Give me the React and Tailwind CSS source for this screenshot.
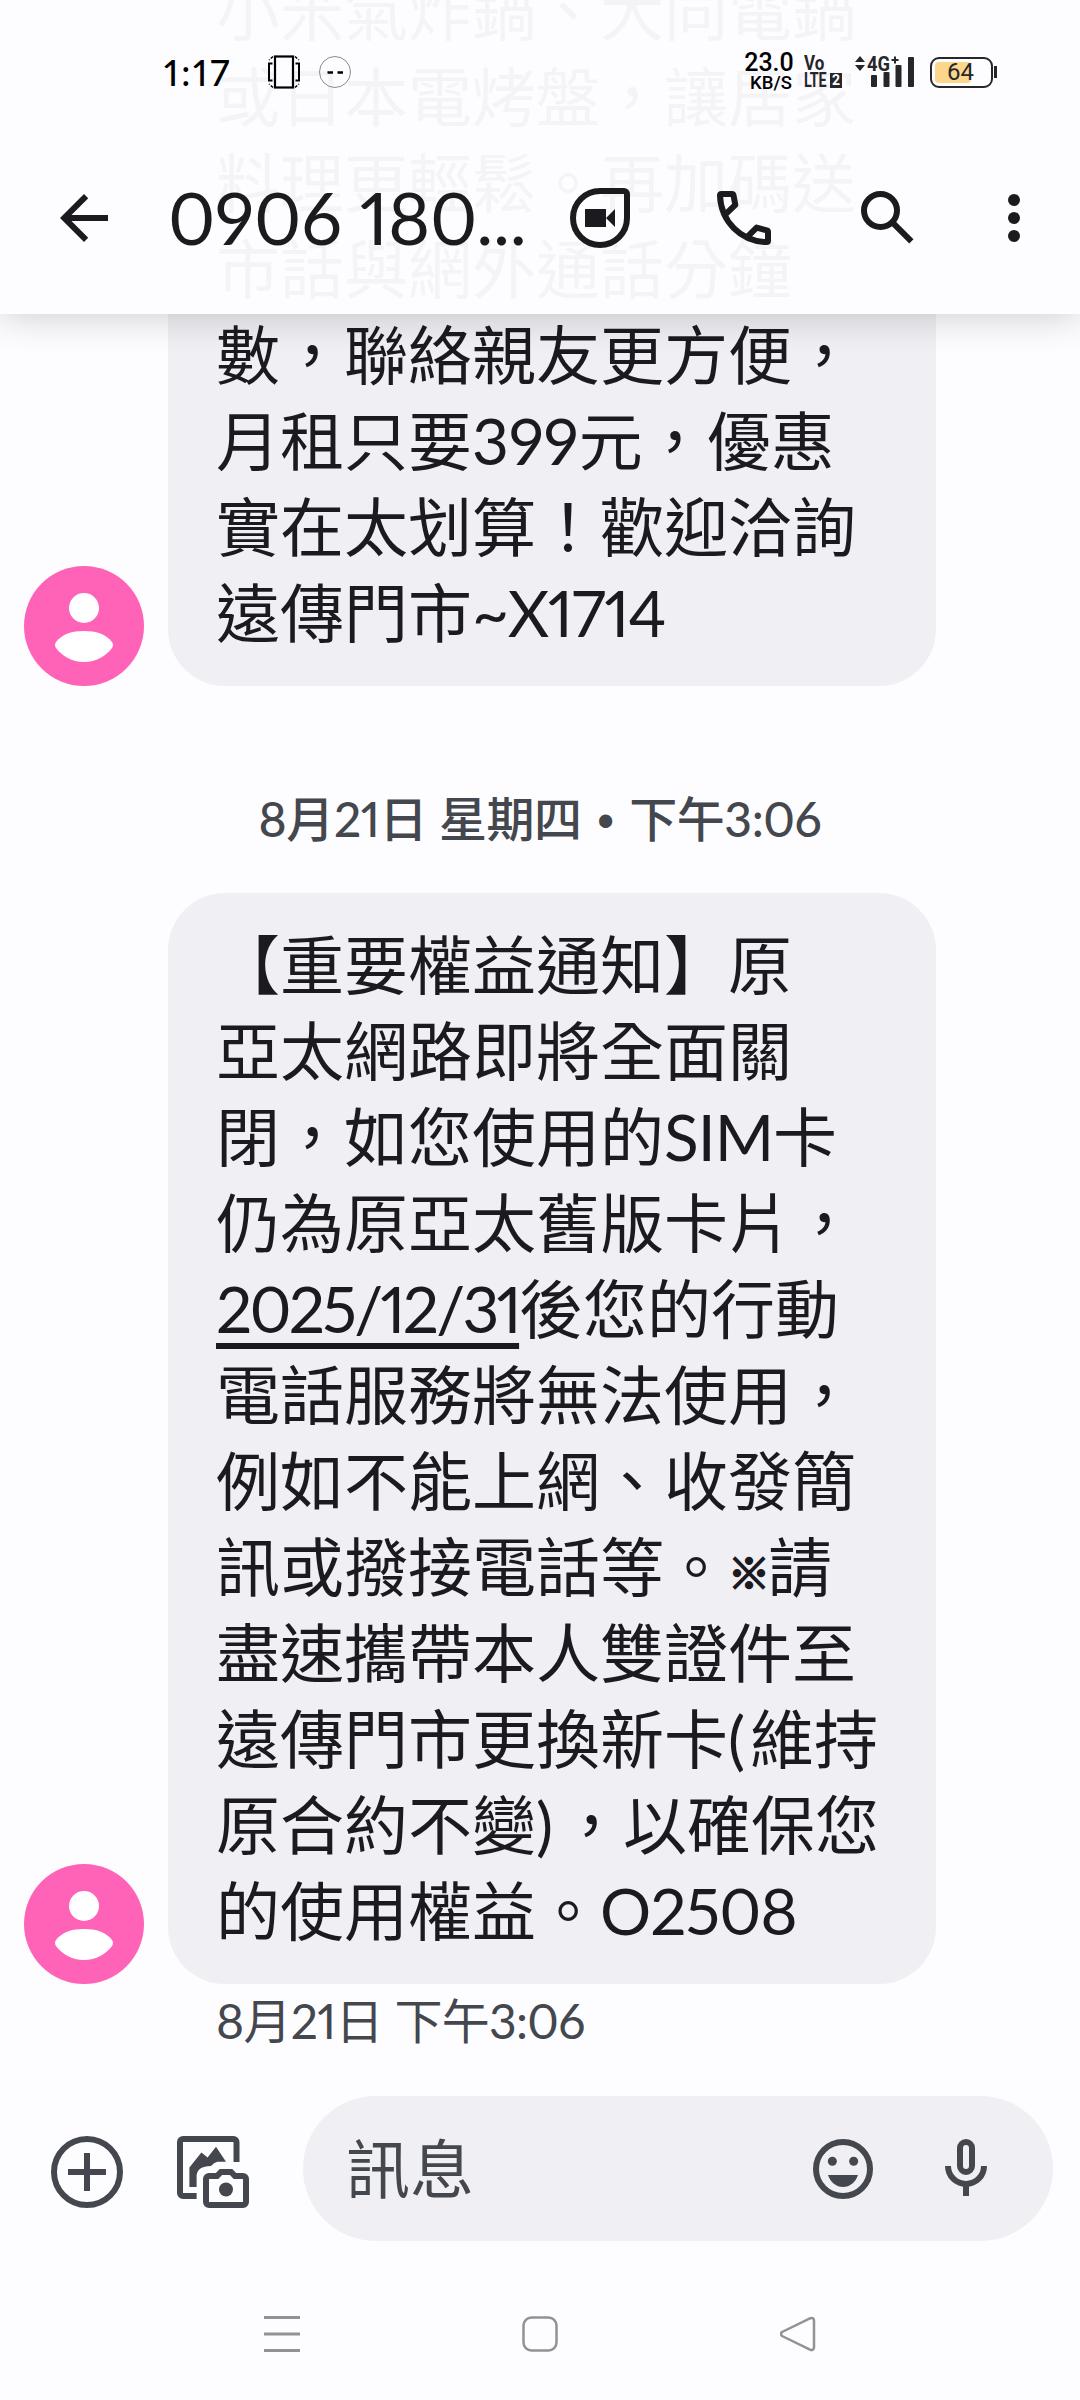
import { clsx } from 'clsx'

const FIRST_MESSAGE = [
  '小米氣炸鍋、大同電鍋',
  '或日本電烤盤，讓居家',
  '料理更輕鬆。再加碼送',
  '市話與網外通話分鐘',
  '數，聯絡親友更方便，',
  <>月租只要<Latin>399</Latin>元，優惠</>,
  '實在太划算！歡迎洽詢',
  <>遠傳門市<Latin className="tracking-[-1.4px]">~X1714</Latin></>,
]

const SECOND_MESSAGE = [
  '【重要權益通知】原',
  '亞太網路即將全面關',
  <>閉，如您使用的<Latin className="tracking-[-1px]">SIM</Latin>卡</>,
  '仍為原亞太舊版卡片，',
  <>
    <Latin className="tracking-[-2.8px] underline decoration-[6px] underline-offset-[10px] [text-decoration-skip-ink:none]">2025/12/31</Latin>
    後您的行動
  </>,
  '電話服務將無法使用，',
  '例如不能上網、收發簡',
  <>訊或撥接電話等。<span className="inline-block w-[40px] text-center align-[2px] text-[42px] leading-none [-webkit-text-stroke:2px_#1b1b1f]">※</span>請</>,
  '盡速攜帶本人雙證件至',
  <>遠傳門市更換新卡<Latin className="tracking-[5px]">(</Latin>維持</>,
  <>原合約不變<Latin className="tracking-[6px]">)</Latin>，以確保您</>,
  <>的使用權益。<Latin className="tracking-[-1px]">O2508</Latin></>,
]

function Latin({ className, children }) {
  return <span className={clsx('proportional-nums', className)}>{children}</span>
}

function Icon({ className, children }) {
  return (
    <svg viewBox="0 0 24 24" fill="currentColor" className={clsx('size-[72px] shrink-0', className)}>
      {children}
    </svg>
  )
}

function StatusBar() {
  return (
    <div className="flex h-[144px] items-center pl-[164px] pr-[83px] text-black">
      <span className="w-[103px] text-[36px] font-medium leading-none tracking-[2.8px] proportional-nums">1:17</span>
      <svg viewBox="0 0 34 34" className="size-[34px]" fill="none" stroke="currentColor">
        <rect x="8" y="1.5" width="18" height="31" strokeWidth="2.2" />
        <path d="M5.5 8.5H2v17h3.5M28.5 8.5H32v17h-3.5" strokeWidth="2" />
        <path d="M6 1.5 2 5M28 1.5 32 5M6 32.5 2 29M28 32.5 32 29" strokeWidth="1.5" strokeDasharray="3 1.5" />
      </svg>
      <svg viewBox="0 0 34 34" className="ml-[17px] size-[34px]" fill="none">
        <circle cx="17" cy="17" r="15.5" stroke="#8b8b90" strokeWidth="1" />
        <path d="M9.5 17.5h5.5M19.5 17.5H25" stroke="#000" strokeWidth="2.5" />
      </svg>

      <div className="ml-auto flex items-center">
        <div className="flex w-[50px] flex-col items-center font-[Roboto] font-medium">
          <span className="-ml-[4px] text-[25px] leading-[19px]">23.0</span>
          <span className="mt-[2px] text-[18.5px] leading-[18px]">KB/S</span>
        </div>
        <div className="ml-[8px] w-[39px] font-[Roboto] font-bold text-[#26262b]">
          <p className="origin-left scale-x-[0.85] text-[20px] leading-[17px]">Vo</p>
          <p className="flex items-center text-[20px] leading-[17px]">
            <span className="w-[26px] origin-left scale-x-[0.72] tracking-[-0.5px]">LTE</span>
            <span className="flex h-[15px] w-[12px] items-center justify-center bg-[#26262b] text-[14px] text-white">2</span>
          </p>
        </div>
        <svg viewBox="0 0 62 34" className="ml-[11px] h-[34px] w-[62px]" fill="#26262b">
          <path d="m6 1 5 6H1zM6 16l5-6H1z" />
          <text x="13" y="15.5" fontSize="21" fontWeight="700" fontFamily="Roboto" textLength="23" lengthAdjust="spacingAndGlyphs">4G</text>
          <path d="M37.5 5h7M41 1.5v7" stroke="#26262b" strokeWidth="2" />
          <rect x="17" y="20" width="6" height="12" rx="1" />
          <rect x="29.5" y="17" width="6" height="15" rx="1" />
          <rect x="41.5" y="10" width="6" height="22" rx="1" />
          <rect x="54" y="2" width="6" height="30" rx="1" />
        </svg>
        <div className="ml-[14px] flex items-center">
          <div className="relative flex h-[31px] w-[63px] items-center justify-center rounded-[9px] border-[2.5px] border-[#26262b] p-[3px]">
            <div className="mr-auto h-full w-[36px] rounded-[4px] bg-[#fcd68a]" />
            <span className="absolute left-[15px] font-[Roboto] text-[24px] leading-none text-[#26262b]">64</span>
          </div>
          <div className="ml-px h-[12px] w-[3px] bg-[#26262b]" />
        </div>
      </div>
    </div>
  )
}

function Header() {
  return (
    <header className="absolute inset-x-0 top-0 h-[314px] bg-[#fdfcff]/96 text-[#1b1b1f] shadow-[0_2px_36px_rgba(0,0,0,0.2)]">
      <StatusBar />
      <div className="flex h-[148px] items-center pl-12">
        <Icon>
          <path d="M20 11H7.83l5.59-5.59L12 4l-8 8 8 8 1.41-1.41L7.83 13H20v-2z" />
        </Icon>
        <h1 className="-mt-[3px] ml-[48px] w-[396px] whitespace-nowrap text-[72px] leading-none tracking-[-0.3px] proportional-nums">0906 180...</h1>
        <Icon>
          <path d="M12 3h8a1 1 0 0 1 1 1v8a9 9 0 1 1-9-9z" fill="none" stroke="currentColor" strokeWidth="2" />
          <path d="M7 9h7v3l3-3v6l-3-3v3H7z" />
        </Icon>
        <Icon className="ml-[72px]">
          <path d="M5.8 10.8 9.1 7.6 8.5 4.4Q8.4 4 8 4H4.5Q4 4 4 4.5C4.3 13.2 11 19.8 19.5 20Q20 20 20 19.5V16.6Q20 16.2 19.6 16.1L16.2 15.2 13.2 18.2" fill="none" stroke="currentColor" strokeWidth="2" strokeLinejoin="round" />
        </Icon>
        <Icon className="ml-[72px]">
          <circle cx="9.5" cy="9.5" r="5.5" fill="none" stroke="currentColor" strokeWidth="2" />
          <path d="m13.8 13.8 6 6" stroke="currentColor" strokeWidth="2" />
        </Icon>
        <Icon className="ml-[54px]">
          <circle cx="12" cy="6" r="2" />
          <circle cx="12" cy="12" r="2" />
          <circle cx="12" cy="18" r="2" />
        </Icon>
      </div>
    </header>
  )
}

function Avatar() {
  return (
    <svg viewBox="0 0 120 120" className="size-[120px] shrink-0">
      <circle cx="60" cy="60" r="60" fill="#ff63b8" />
      <circle cx="60" cy="42" r="15" fill="#fff" />
      <path d="M32 76c6-8 16-11 28-11s22 3 28 11q2 3 0 6c-6 8-16 14-28 14s-22-6-28-14q-2-3 0-6z" fill="#fff" />
    </svg>
  )
}

function Message({ lines }) {
  return (
    <div className="flex items-end gap-6 pl-6">
      <Avatar />
      <div className="w-[768px] rounded-[57px] bg-[#f0eff4] pb-[30px] pl-12 pt-[29px] text-[64px] leading-[86px] text-[#1b1b1f]">
        {lines.map((line, i) => (
          <p key={i} className="h-[86px] whitespace-nowrap">{line}</p>
        ))}
      </div>
    </div>
  )
}

function Composer() {
  return (
    <div className="flex h-[145px] items-center pl-[51px] pr-[27px] text-[#44474d]">
      <svg viewBox="0 0 72 72" className="mt-[7px] size-[72px]" fill="none" stroke="currentColor" strokeWidth="6">
        <circle cx="36" cy="36" r="33" />
        <path d="M17 36h38M36 17v38" />
      </svg>
      <svg viewBox="0 0 72 72" className="ml-[54px] mt-[7px] size-[72px]" fill="currentColor">
        <path d="M19.6 60H6a3 3 0 0 1-3-3V6a3 3 0 0 1 3-3h50.5a3 3 0 0 1 3 3v20" fill="none" stroke="currentColor" strokeWidth="6" />
        <path d="m12.4 31.5 12-15 6.2 5L39 10.7l10 15h-8.5q-3 .5-6.500 4.300-14 0-14.400 10v11h-7.200z" />
        <path d="M32 40h8l4-4h10l4 4h8a3 3 0 0 1 3 3v23a3 3 0 0 1-3 3H32a3 3 0 0 1-3-3V43a3 3 0 0 1 3-3z" fill="none" stroke="currentColor" strokeWidth="6" />
        <circle cx="49" cy="53.5" r="7" />
      </svg>
      <div className="ml-[54px] flex h-full flex-1 items-center rounded-full bg-[#f0eff4] pl-[43px] pr-[51px]">
        <span className="text-[64px] leading-none">訊息</span>
        <Icon className="ml-auto">
          <circle cx="12" cy="12" r="9" fill="none" stroke="currentColor" strokeWidth="2" />
          <circle cx="8.45" cy="9.4" r="1.5" />
          <circle cx="15.55" cy="9.4" r="1.5" />
          <path d="M7 14h10c-.8 2.4-2.7 4-5 4s-4.200-1.600-5-4z" />
        </Icon>
        <Icon className="ml-[51px]">
          <path d="M12 3a2 2 0 0 1 2 2v6a2 2 0 0 1-4 0V5a2 2 0 0 1 2-2zM6 11a6 6 0 0 0 12 0M12 17v4" fill="none" stroke="currentColor" strokeWidth="2" />
        </Icon>
      </div>
    </div>
  )
}

function NavigationBar() {
  return (
    <nav className="flex items-center justify-between px-[264px] text-[#929294]">
      <svg viewBox="0 0 36 36" className="size-9" stroke="currentColor" strokeWidth="3">
        <path d="M0 1.5h36M0 18h36M0 34.5h36" />
      </svg>
      <svg viewBox="0 0 36 36" className="size-9" fill="none" stroke="currentColor" strokeWidth="2.5">
        <rect x="1.5" y="1.5" width="33" height="33" rx="8" />
      </svg>
      <svg viewBox="0 0 36 36" className="size-9" fill="none" stroke="currentColor" strokeWidth="2.5" strokeLinejoin="round">
        <path d="M30 2.3 2 16q-2 2 0 4l28 13.700q4 1 4-2.500V4.800q0-3.500-4-2.500z" />
      </svg>
    </nav>
  )
}

export default function App() {
  return (
    <div className="relative h-[2400px] w-[1080px] overflow-hidden bg-[#fdfdff] font-[Lato,'Noto_Sans_CJK_TC',sans-serif] [text-spacing-trim:space-all]">
      <main className="-mt-[61px] flex h-[2157px] flex-col">
        <Message lines={FIRST_MESSAGE} />
        <p className="mb-[44px] mt-[102px] h-[61px] whitespace-nowrap text-center text-[48px] font-medium leading-[61px] tracking-[-0.4px] text-[#44474d] proportional-nums">
          8月21日 星期四 <span className="inline-block w-[24px] text-center align-[5px] text-[34px] leading-none">•</span> 下午3:06
        </p>
        <Message lines={SECOND_MESSAGE} />
        <p className="pl-[216px] pt-[6px] text-[48px] leading-[61px] tracking-[-0.7px] text-[#44474d] proportional-nums">8月21日 下午3:06</p>
      </main>
      <Composer />
      <div className="mt-[75px]">
        <NavigationBar />
      </div>
      <Header />
    </div>
  )
}
